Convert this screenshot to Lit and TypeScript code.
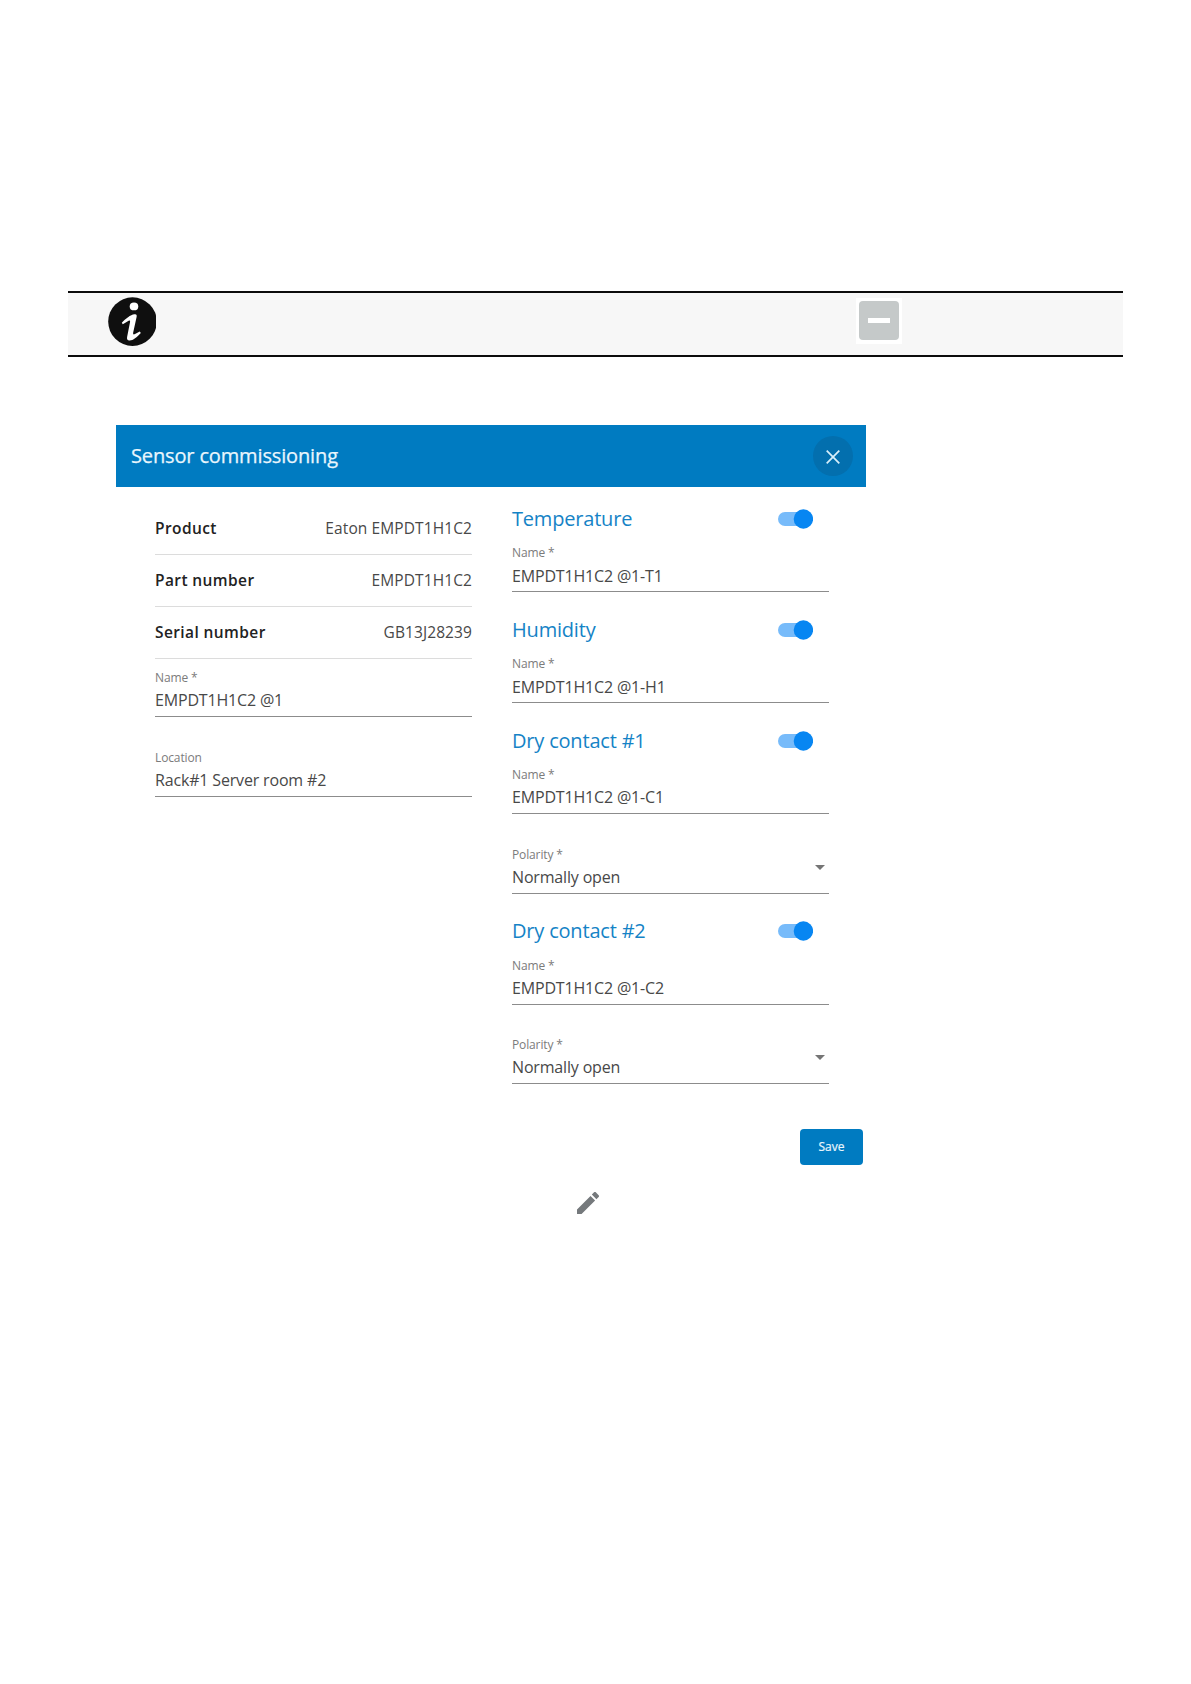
import { LitElement, html, css, nothing } from 'lit';
import { customElement, property, state } from 'lit/decorators.js';

interface Sensor {
  title: string;
  name: string;
  polarity?: string;
}

@customElement('text-field')
export class TextField extends LitElement {
  static styles = css`
    :host {
      display: block;
      box-sizing: border-box;
      height: 49px;
      border-bottom: 1px solid #8c8c8c;
    }
    .label {
      padding-top: 1px;
      font-size: 12px;
      line-height: 18px;
      color: #7b7b7b;
      letter-spacing: -0.13px;
    }
    .row {
      display: flex;
      justify-content: space-between;
      padding-top: var(--value-gap, 1px);
    }
    .value {
      font-size: 16px;
      line-height: 24px;
      color: #484848;
      white-space: nowrap;
      letter-spacing: -0.17px;
    }
    .arrow {
      width: 0;
      height: 0;
      margin-right: 4px;
      border-left: 5px solid transparent;
      border-right: 5px solid transparent;
      border-top: 5px solid #757575;
    }
  `;

  @property() label = '';
  @property() value = '';
  @property({ type: Boolean }) select = false;

  render() {
    return html`
      <div class="label">${this.label}</div>
      <div class="row">
        <span class="value">${this.value}</span>
        ${this.select ? html`<span class="arrow"></span>` : nothing}
      </div>
    `;
  }
}

@customElement('slide-toggle')
export class SlideToggle extends LitElement {
  static styles = css`
    :host {
      display: block;
      width: 35px;
      height: 20px;
    }
    svg {
      display: block;
    }
  `;

  render() {
    return html`
      <svg width="35" height="20" viewBox="0 0 35 20">
        <rect x="0" y="3" width="33" height="14" rx="7" fill="#77bbfa" />
        <circle cx="25.4" cy="10" r="9.7" fill="#0786f2" />
      </svg>
    `;
  }
}

@customElement('app-root')
export class AppRoot extends LitElement {
  static styles = css`
    :host {
      display: block;
      box-sizing: border-box;
      height: 1684px;
      padding: 291px 68px 0;
      background: #fff;
      font-family: 'Open Sans', 'Noto Sans', sans-serif;
    }
    .note {
      display: flex;
      box-sizing: border-box;
      justify-content: space-between;
      width: 1055px;
      height: 66px;
      padding: 4px 221px 0 40px;
      border-top: 2px solid #0c0c0c;
      border-bottom: 2px solid #0c0c0c;
      background: #f7f7f7;
    }
    .note svg {
      display: block;
    }
    .minus {
      margin-top: 1px;
    }
    .dialog {
      width: 750px;
      margin: 68px 0 0 48px;
    }
    .bar {
      display: flex;
      box-sizing: border-box;
      align-items: center;
      justify-content: space-between;
      height: 62px;
      padding: 0 13px 0 15px;
      background: #007bc1;
    }
    .title {
      font-size: 20px;
      line-height: 28px;
      color: #e9f6fd;
      white-space: nowrap;
      letter-spacing: -0.14px;
      -webkit-text-stroke: 0.25px #e9f6fd;
    }
    .close {
      display: flex;
      box-sizing: border-box;
      align-items: center;
      justify-content: center;
      width: 40px;
      height: 40px;
      padding: 2px 0 0;
      border: none;
      border-radius: 50%;
      background: #036fae;
    }
    .body {
      display: grid;
      grid-template-columns: 317px 317px;
      column-gap: 40px;
      padding: 18px 37px 0 39px;
    }
    .details {
      display: flex;
      flex-direction: column;
      margin: -2px 0 9px;
    }
    .detail {
      display: flex;
      box-sizing: border-box;
      justify-content: space-between;
      height: 52px;
      padding-top: 13px;
      border-bottom: 1px solid #dcdcdc;
      font-size: 15.5px;
      line-height: 25px;
      white-space: nowrap;
      color: #484848;
      letter-spacing: 0.1px;
    }
    .key {
      font-weight: 600;
      color: #222;
      letter-spacing: 0.4px;
    }
    .fields {
      display: flex;
      flex-direction: column;
      gap: 31px;
    }
    .sensors {
      display: flex;
      flex-direction: column;
      gap: 24px;
    }
    .sensor:nth-child(-n + 2) {
      --value-gap: 2px;
    }
    .head {
      display: flex;
      align-items: center;
      justify-content: space-between;
      height: 28px;
      margin-bottom: 10px;
      padding-right: 16px;
    }
    .sensor:last-child .head {
      margin: -1px 0 11px;
    }
    .sensor:last-child .fields {
      gap: 30px;
    }
    .name {
      font-size: 20px;
      line-height: 28px;
      color: #1583c6;
      white-space: nowrap;
      letter-spacing: -0.19px;
    }
    .actions {
      display: flex;
      justify-content: flex-end;
      padding: 45px 3px 0 0;
    }
    .save {
      width: 63px;
      height: 36px;
      padding: 0 0 1px;
      border: none;
      border-radius: 4px;
      background: #007bc1;
      color: #e9f6fd;
      font-family: inherit;
      font-size: 12px;
      -webkit-text-stroke: 0.2px #e9f6fd;
    }
    .edit {
      display: block;
      margin: 27px 0 0 509px;
    }
  `;

  @state() private details = [
    ['Product', 'Eaton EMPDT1H1C2'],
    ['Part number', 'EMPDT1H1C2'],
    ['Serial number', 'GB13J28239'],
  ];

  @state() private sensors: Sensor[] = [
    { title: 'Temperature', name: 'EMPDT1H1C2 @1-T1' },
    { title: 'Humidity', name: 'EMPDT1H1C2 @1-H1' },
    { title: 'Dry contact #1', name: 'EMPDT1H1C2 @1-C1', polarity: 'Normally open' },
    { title: 'Dry contact #2', name: 'EMPDT1H1C2 @1-C2', polarity: 'Normally open' },
  ];

  private renderSensor(sensor: Sensor) {
    return html`
      <section class="sensor">
        <div class="head">
          <span class="name">${sensor.title}</span>
          <slide-toggle></slide-toggle>
        </div>
        <div class="fields">
          <text-field label="Name *" value=${sensor.name}></text-field>
          ${sensor.polarity
            ? html`<text-field label="Polarity *" value=${sensor.polarity} select></text-field>`
            : nothing}
        </div>
      </section>
    `;
  }

  render() {
    return html`
      <div class="note">
        <svg width="48" height="49" viewBox="0 0 48 49">
          <circle cx="24.5" cy="24.6" r="24.3" fill="#0f0f0f" />
          <ellipse cx="26" cy="9.4" rx="4.3" ry="3.9" fill="#fff" />
          <path d="M13.8 25.8C17.5 21.5 22.5 17.8 26.5 17.2C28.6 16.9 29 18.2 28.6 20L25.2 35.6C24.8 37.4 25.6 37.8 27 37L31.8 34.6L32.8 36C29 40.4 25 43.3 21.8 43.6C19.4 43.8 18.7 42.2 19.1 40L22 25.2C22.4 23.4 21.4 23.2 19.8 24.2L14.8 27.2Z" fill="#fff" />
        </svg>
        <svg class="minus" width="46" height="46" viewBox="0 0 46 46">
          <rect width="46" height="46" fill="#fff" />
          <rect x="3" y="3" width="40" height="39" rx="4" fill="#c5c9c9" />
          <rect x="12" y="20" width="22" height="5" fill="#fff" />
        </svg>
      </div>

      <div class="dialog">
        <div class="bar">
          <span class="title">Sensor commissioning</span>
          <button class="close" aria-label="Close">
            <svg width="14" height="14" viewBox="0 0 14 14">
              <path d="M.7 .7L13.3 13.3M13.3 .7L.7 13.3" stroke="#d8effb" stroke-width="1.7" />
            </svg>
          </button>
        </div>
        <div class="body">
          <div>
            <div class="details">
              ${this.details.map(([key, value]) => html`
                <div class="detail"><span class="key">${key}</span><span>${value}</span></div>
              `)}
            </div>
            <div class="fields">
              <text-field label="Name *" value="EMPDT1H1C2 @1"></text-field>
              <text-field label="Location" value="Rack#1 Server room #2"></text-field>
            </div>
          </div>
          <div class="sensors">${this.sensors.map(s => this.renderSensor(s))}</div>
        </div>
        <div class="actions"><button class="save">Save</button></div>
      </div>

      <svg class="edit" width="22" height="22" viewBox="3 3 18 18">
        <path d="M3 17.25V21h3.75L17.81 9.94l-3.75-3.75L3 17.25zM20.71 7.04c.39-.39.39-1.02 0-1.41l-2.34-2.34c-.39-.39-1.02-.39-1.41 0l-1.83 1.83 3.75 3.75 1.83-1.83z" fill="#75797c" />
      </svg>
    `;
  }
}
